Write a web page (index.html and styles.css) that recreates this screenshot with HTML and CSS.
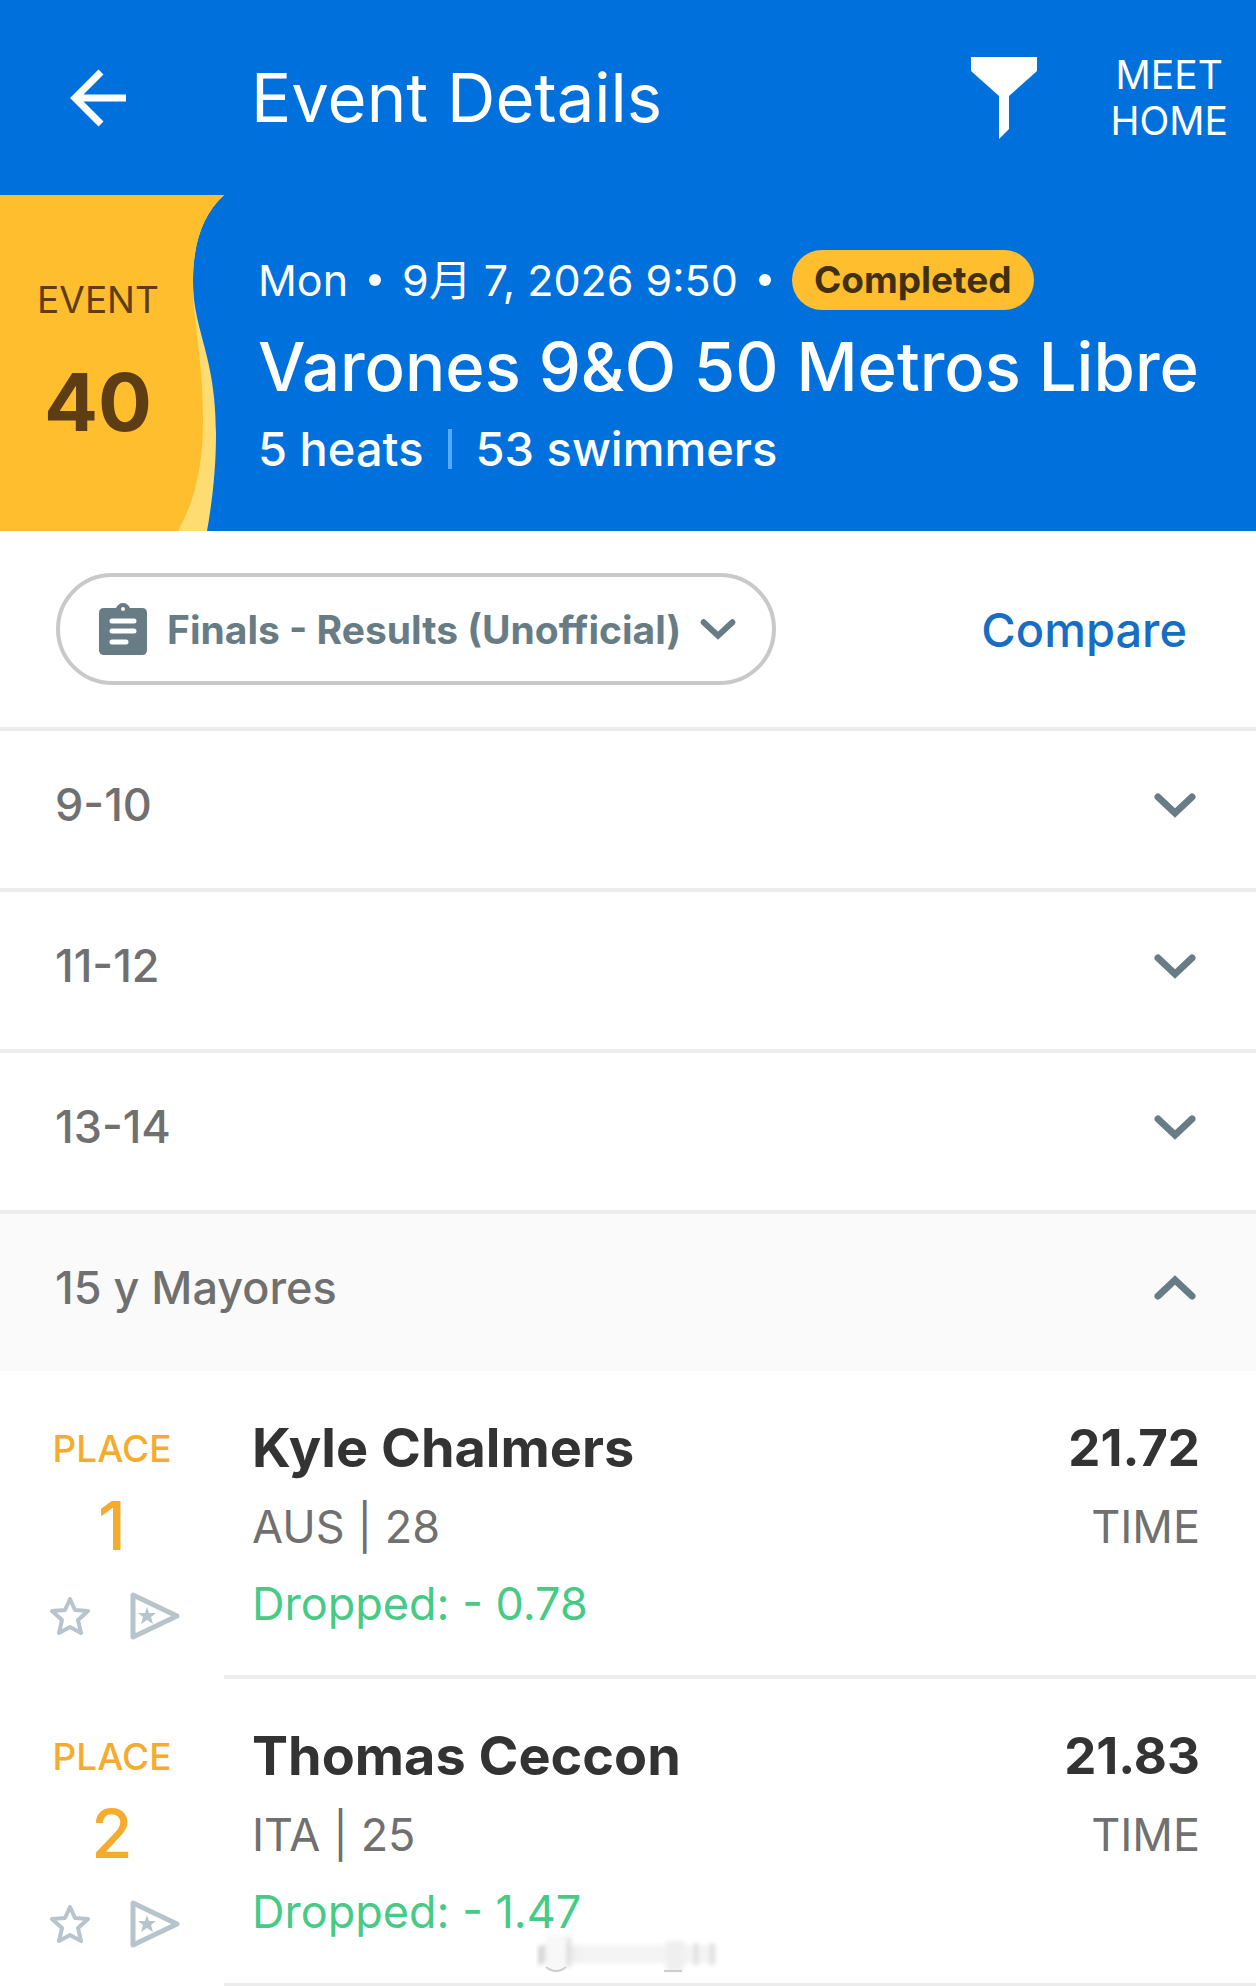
FILE: index.html
```html
<!DOCTYPE html>
<html lang="en">
<head>
    <meta charset="UTF-8">
    <meta name="viewport" content="width=device-width, initial-scale=1.0">
    <title>Event Details</title>
    <link rel="stylesheet" href="styles.css">
</head>
<body>
    <!-- Shared icons -->
    <svg class="sprite" aria-hidden="true">
        <symbol id="chevron" viewBox="0 0 42 26">
            <path d="M4 5 L21 21 L38 5" fill="none" stroke="currentColor" stroke-width="7" stroke-linecap="round"/>
        </symbol>
        <symbol id="star" viewBox="0 0 40 40">
            <path d="M20 3 L25 14 L38 15 L28 24 L31 37 L20 31 L9 37 L12 24 L2 15 L15 14 Z" fill="none" stroke="currentColor" stroke-width="4" stroke-linejoin="round"/>
        </symbol>
        <symbol id="play" viewBox="0 0 50 48">
            <path d="M3 3 V45 L47 24 Z" fill="none" stroke="currentColor" stroke-width="5" stroke-linejoin="round"/>
            <path d="M17 15 L19 21 L26 21 L21 25 L23 32 L17 28 L11 32 L13 25 L8 21 L15 21 Z" fill="currentColor"/>
        </symbol>
    </svg>

    <header class="app-bar">
        <button class="icon-btn back" aria-label="Back">
            <svg width="56" height="58" viewBox="0 0 56 58">
                <path d="M31 3 L5 29 L31 55 M5 29 H56" fill="none" stroke="currentColor" stroke-width="7"/>
            </svg>
        </button>
        <h1 class="page-title">Event Details</h1>
        <button class="icon-btn" aria-label="Filter">
            <svg width="66" height="82" viewBox="0 0 66 82">
                <path d="M0 0 H66 V14 L38 39 V72 L28 82 V39 L0 14 Z" fill="currentColor"/>
            </svg>
        </button>
        <a class="meet-home" href="#">MEET<br>HOME</a>
    </header>

    <section class="hero">
        <div class="event-tag">
            <svg class="wave" viewBox="0 0 224 336" preserveAspectRatio="none" aria-hidden="true">
                <path d="M0 0 H224 C202 20 193 50 193 86 C193 136 216 160 216 238 C216 275 212 308 207 336 H0 Z" fill="#ffdc72"/>
                <path d="M0 0 H224 C202 20 193 50 193 86 C193 134 203 158 203 226 C203 272 195 305 178 336 H0 Z" fill="#ffbe2d"/>
            </svg>
            <span class="event-label">EVENT</span>
            <span class="event-number">40</span>
        </div>
        <div class="event-info">
            <div class="event-date">
                <span>Mon</span>
                <i class="dot"></i>
                <span>9月 7, 2026 9:50</span>
                <i class="dot"></i>
                <span class="badge">Completed</span>
            </div>
            <h2 class="event-name">Varones 9&amp;O 50 Metros Libre</h2>
            <div class="event-counts">
                <span>5 heats</span>
                <i class="divider"></i>
                <span>53 swimmers</span>
            </div>
        </div>
    </section>

    <div class="toolbar">
        <div class="round-picker">
            <label for="round" aria-label="Round">
                <svg width="48" height="52" viewBox="0 0 48 52">
                    <path fill-rule="evenodd" fill="currentColor" d="M5 5 H17 C18 2 21 0 24 0 C27 0 30 2 31 5 H43 Q48 5 48 10 V47 Q48 52 43 52 H5 Q0 52 0 47 V10 Q0 5 5 5 Z M24 4 A2 2 0 0 0 24 8 A2 2 0 0 0 24 4 Z"/>
                    <path d="M13 18 H35 M13 28 H35 M13 39 H27" fill="none" stroke="#fff" stroke-width="5" stroke-linecap="round"/>
                </svg>
            </label>
            <select id="round">
                <option>Finals - Results (Unofficial)</option>
            </select>
            <svg class="picker-arrow" width="36" height="22"><use href="#chevron"/></svg>
        </div>
        <a class="compare" href="#">Compare</a>
    </div>

    <main>
        <button class="age-group" aria-expanded="false">
            <span>9-10</span>
            <svg class="chevron"><use href="#chevron"/></svg>
        </button>
        <button class="age-group" aria-expanded="false">
            <span>11-12</span>
            <svg class="chevron"><use href="#chevron"/></svg>
        </button>
        <button class="age-group" aria-expanded="false">
            <span>13-14</span>
            <svg class="chevron"><use href="#chevron"/></svg>
        </button>
        <button class="age-group open" aria-expanded="true">
            <span>15 y Mayores</span>
            <svg class="chevron"><use href="#chevron"/></svg>
        </button>

        <ul class="results">
            <li class="result">
                <div class="place">
                    <span class="place-label">PLACE</span>
                    <span class="place-number">1</span>
                    <div class="actions">
                        <button class="icon-btn" aria-label="Favorite"><svg width="40" height="40"><use href="#star"/></svg></button>
                        <button class="icon-btn" aria-label="Watch"><svg width="50" height="48"><use href="#play"/></svg></button>
                    </div>
                </div>
                <div class="details">
                    <div class="swimmer">
                        <h3 class="name">Kyle Chalmers</h3>
                        <p class="meta">AUS | 28</p>
                        <p class="dropped">Dropped: - 0.78</p>
                    </div>
                    <div class="time">
                        <strong>21.72</strong>
                        <span class="meta">TIME</span>
                    </div>
                </div>
            </li>
            <li class="result">
                <div class="place">
                    <span class="place-label">PLACE</span>
                    <span class="place-number">2</span>
                    <div class="actions">
                        <button class="icon-btn" aria-label="Favorite"><svg width="40" height="40"><use href="#star"/></svg></button>
                        <button class="icon-btn" aria-label="Watch"><svg width="50" height="48"><use href="#play"/></svg></button>
                    </div>
                </div>
                <div class="details">
                    <div class="swimmer">
                        <h3 class="name">Thomas Ceccon</h3>
                        <p class="meta">ITA | 25</p>
                        <p class="dropped">Dropped: - 1.47</p>
                    </div>
                    <div class="time">
                        <strong>21.83</strong>
                        <span class="meta">TIME</span>
                    </div>
                </div>
                <!-- Faint smudge over the bottom of the list -->
                <svg class="smudge" width="184" height="42" viewBox="0 0 184 42" aria-hidden="true">
                    <defs>
                        <linearGradient id="fade">
                            <stop offset="0" stop-color="#ccc"/>
                            <stop offset="0.25" stop-color="#eee"/>
                            <stop offset="1" stop-color="#eee"/>
                        </linearGradient>
                        <filter id="soft"><feGaussianBlur stdDeviation="2"/></filter>
                    </defs>
                    <g filter="url(#soft)">
                        <rect x="3" y="12" width="178" height="18" fill="url(#fade)" opacity="0.7"/>
                        <path d="M4 14 V32" fill="none" stroke="#ccc" stroke-width="4" opacity="0.7"/>
                        <rect x="10" y="2" width="20" height="36" rx="4" fill="#f8f8f8"/>
                        <rect x="130" y="8" width="18" height="30" fill="#efefef"/>
                        <path d="M33 4 V34 M160 10 V32 M176 10 V32" fill="none" stroke="#ddd" stroke-width="4"/>
                    </g>
                    <path d="M10 34 Q20 42 30 34 M128 38 H146" fill="none" stroke="#ccc" stroke-width="2"/>
                </svg>
            </li>
        </ul>
    </main>
</body>
</html>
```
FILE: styles.css
```css
* {
    box-sizing: border-box;
}

body {
    margin: 0;
    background-color: #fff;
    color: #333;
    font-family: Inter, "Noto Sans CJK SC", sans-serif;
}

h1, h2, h3, p, ul {
    margin: 0;
    padding: 0;
}

a {
    text-decoration: none;
}

button, select {
    font-family: inherit;
    border: none;
    background: none;
    padding: 0;
    cursor: pointer;
}

svg {
    display: block;
}

.sprite {
    display: none;
}

.icon-btn {
    color: inherit;
}

/* Top bar */
.app-bar {
    display: flex;
    align-items: center;
    height: 195px;
    padding: 0 28px 0 70px;
    background-color: #0071dc;
    color: #fff;
}

.page-title {
    flex: 1;
    margin-left: 125px;
    font-size: 67px;
    font-weight: 400;
}

.meet-home {
    margin-left: 74px;
    color: #fff;
    font-size: 39px;
    line-height: 46px;
    text-align: center;
}

/* Event header */
.hero {
    display: flex;
    min-height: 336px;
    background-color: #0071dc;
    color: #fff;
}

.event-tag {
    position: relative;
    display: flex;
    flex-direction: column;
    align-items: center;
    justify-content: center;
    gap: 30px;
    width: 224px;
    padding-right: 28px;
    color: #5c3d14;
}

.wave {
    position: absolute;
    top: 0;
    left: 0;
    width: 100%;
    height: 100%;
}

.event-label {
    position: relative;
    font-size: 37px;
    line-height: 48px;
}

.event-number {
    position: relative;
    font-size: 80px;
    font-weight: 700;
    line-height: 96px;
}

.event-info {
    flex: 1;
    display: flex;
    flex-direction: column;
    gap: 12px;
    padding: 55px 34px;
}

.event-date {
    display: flex;
    align-items: center;
    font-size: 43px;
    line-height: 60px;
}

.dot {
    width: 12px;
    height: 12px;
    margin: 0 21px;
    border-radius: 50%;
    background-color: #fff;
}

.badge {
    padding: 0 22px;
    border-radius: 30px;
    background-color: #ffbe2d;
    color: #40300f;
    font-size: 37px;
    font-weight: 700;
}

.event-name {
    font-size: 67px;
    font-weight: 500;
    line-height: 90px;
    white-space: nowrap;
}

.event-counts {
    display: flex;
    align-items: center;
    font-size: 47px;
    font-weight: 500;
    line-height: 50px;
}

.divider {
    width: 4px;
    height: 40px;
    margin: 0 24px;
    background-color: #57a8ff;
}

/* Round picker and compare link */
.toolbar {
    display: flex;
    align-items: center;
    justify-content: space-between;
    padding: 42px 69px 42px 56px;
}

.round-picker {
    display: flex;
    align-items: center;
    height: 112px;
    padding: 0 36px 0 39px;
    border: 4px solid #c9c9c9;
    border-radius: 56px;
    color: #687c85;
}

.round-picker select {
    margin: 0 18px 0 20px;
    appearance: none;
    color: inherit;
    font-size: 39px;
    font-weight: 700;
}

.compare {
    color: #176dc1;
    font-size: 47px;
    font-weight: 500;
}

/* Age groups */
.age-group {
    display: flex;
    align-items: center;
    justify-content: space-between;
    width: 100%;
    padding: 46px 60px 55px 55px;
    border-top: 4px solid #ececec;
    color: #707070;
    font-size: 45px;
    font-weight: 500;
    line-height: 56px;
}

.age-group.open {
    background-color: #fafafa;
}

.chevron {
    width: 42px;
    height: 26px;
    color: #687c85;
}

.open .chevron {
    transform: rotate(180deg);
}

/* Results */
.results {
    list-style: none;
}

.result {
    position: relative;
    display: flex;
}

.place {
    display: flex;
    flex-direction: column;
    align-items: center;
    width: 224px;
    padding-top: 55px;
    color: #f5ac2e;
}

.place-label {
    font-size: 37px;
    font-weight: 500;
    line-height: 46px;
}

.place-number {
    margin: 14px 0 26px;
    font-size: 67px;
    font-weight: 500;
    line-height: 80px;
}

.actions {
    display: flex;
    align-items: center;
    gap: 40px;
    padding-left: 6px;
    color: #b8c4cb;
}

.details {
    flex: 1;
    display: flex;
    justify-content: space-between;
    padding: 37px 56px 33px 28px;
    border-bottom: 4px solid #ececec;
}

.name,
.time strong {
    font-weight: 700;
    line-height: 80px;
}

.name {
    font-size: 54px;
}

.time strong {
    font-size: 51px;
}

.meta,
.dropped {
    font-size: 45px;
    line-height: 77px;
}

.meta {
    color: #707070;
}

.dropped {
    color: #45cb85;
}

.time {
    display: flex;
    flex-direction: column;
    text-align: right;
}

.smudge {
    position: absolute;
    left: 536px;
    bottom: 12px;
}
```
